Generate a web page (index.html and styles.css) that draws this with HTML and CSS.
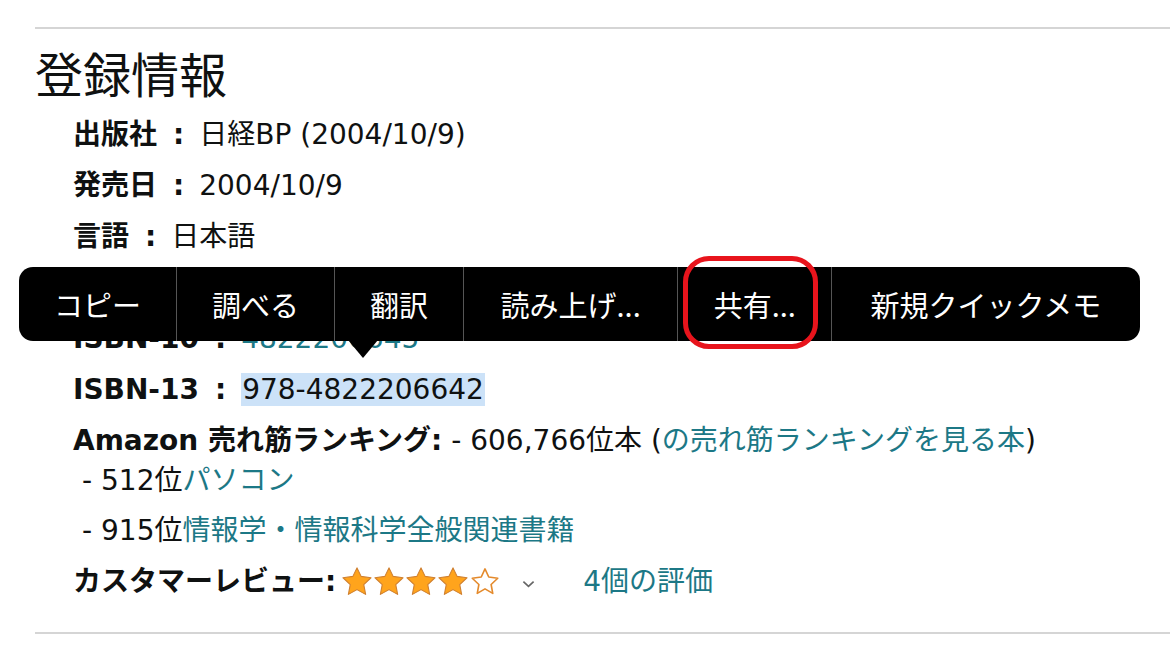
FILE: index.html
```html
<!DOCTYPE html>
<html lang="ja">
<head>
<meta charset="utf-8">
<title>登録情報</title>
<link rel="stylesheet" href="styles.css">
</head>
<body>
<div class="page">
  <hr class="rule">
  <h2 class="title">登録情報</h2>
  <ul class="details">
    <li><span class="k">出版社<span class="sep">:</span></span>日経BP (2004/10/9)</li>
    <li><span class="k">発売日<span class="sep">:</span></span>2004/10/9</li>
    <li><span class="k">言語<span class="sep">:</span></span>日本語</li>
    <li class="covered"><span class="k">単行本<span class="sep">:</span></span>296ページ</li>
    <li><span class="k">ISBN-10<span class="sep">:</span></span><a class="link">4822206645</a></li>
    <li><span class="k">ISBN-13<span class="sep">:</span></span><span class="sel">978-4822206642</span></li>
    <li class="rank"><span class="k">Amazon 売れ筋ランキング:</span> - 606,766位本 (<a class="link">の売れ筋ランキングを見る本</a>)
      <ul class="sub">
        <li>- 512位<a class="link">パソコン</a></li>
        <li>- 915位<a class="link">情報学・情報科学全般関連書籍</a></li>
      </ul>
    </li>
    <li class="review"><span class="k">カスタマーレビュー:</span><span class="stars"><svg class="star" viewBox="0 0 24 23"><polygon class="full" points="12,0.6 15.3,7.4 23.2,8.5 17.4,14 18.9,21.8 12,18 5.1,21.8 6.6,14 0.8,8.5 8.7,7.4"/></svg><svg class="star" viewBox="0 0 24 23"><polygon class="full" points="12,0.6 15.3,7.4 23.2,8.5 17.4,14 18.9,21.8 12,18 5.1,21.8 6.6,14 0.8,8.5 8.7,7.4"/></svg><svg class="star" viewBox="0 0 24 23"><polygon class="full" points="12,0.6 15.3,7.4 23.2,8.5 17.4,14 18.9,21.8 12,18 5.1,21.8 6.6,14 0.8,8.5 8.7,7.4"/></svg><svg class="star" viewBox="0 0 24 23"><polygon class="full" points="12,0.6 15.3,7.4 23.2,8.5 17.4,14 18.9,21.8 12,18 5.1,21.8 6.6,14 0.8,8.5 8.7,7.4"/></svg><svg class="star" viewBox="0 0 24 23"><polygon class="empty" points="12,1.4 15.0,7.9 22.2,8.9 16.9,13.9 18.2,21.0 12,17.4 5.8,21.0 7.1,13.9 1.8,8.9 9.0,7.9"/></svg></span><svg class="chev" viewBox="0 0 14 8"><polyline points="1.5,1.5 7,6.5 12.5,1.5"/></svg><a class="link count">4個の評価</a></li>
  </ul>
  <hr class="rule rule-bottom">

  <div class="menu">
    <div class="item">コピー</div>
    <div class="item">調べる</div>
    <div class="item">翻訳</div>
    <div class="item item-read">読み上げ...</div>
    <div class="item item-share">共有...</div>
    <div class="item item-memo">新規クイックメモ</div>
  </div>
  <div class="pointer"></div>
  <div class="annot"></div>
</div>
</body>
</html>
```
FILE: styles.css
```css
html, body {
  margin: 0;
  padding: 0;
  background: #fff;
}
.page {
  position: relative;
  width: 1170px;
  height: 657px;
  overflow: hidden;
  padding: 27px 0 0 35px;
  box-sizing: border-box;
  font-family: "DejaVu Sans", "Noto Sans CJK JP", sans-serif;
  color: #0f1111;
}
.rule {
  margin: 0;
  border: 0;
  height: 2px;
  background: #d5d5d5;
}
.rule-bottom {
  margin-top: 30px;
}
.title {
  margin: 13px 0 0 0;
  font-family: "Noto Sans CJK JP", sans-serif;
  font-weight: 400;
  font-size: 48px;
  line-height: 60px;
}
.details {
  list-style: none;
  margin: 13px 0 0 0;
  padding: 0 0 0 38px;
  font-size: 28px;
  line-height: 40px;
}
.details > li {
  margin-bottom: 11px;
  white-space: nowrap;
}
.details > li.covered {
  visibility: hidden;
}
.k {
  font-weight: 700;
}
.sep {
  margin: 0 15px 0 16px;
}
.link {
  color: #1c7886;
}
.sel {
  background: #cce2f8;
  padding: 0 1px;
}
.sub {
  list-style: none;
  margin: 0;
  padding: 0 0 0 9px;
}
.sub li + li {
  margin-top: 10px;
}
.details > li.rank {
  margin-bottom: 11px;
}
.stars {
  display: inline-flex;
  gap: 2px;
  margin-left: 6px;
  vertical-align: -5px;
}
.star {
  width: 30px;
  height: 29px;
}
.full {
  fill: #ffa41c;
  stroke: #d08030;
  stroke-width: 0.9;
  stroke-linejoin: round;
}
.empty {
  fill: #fff;
  stroke: #e48a2c;
  stroke-width: 1.3;
  stroke-linejoin: round;
}
.chev {
  width: 13px;
  height: 8px;
  margin-left: 22px;
  vertical-align: 3px;
  fill: none;
  stroke: #666;
  stroke-width: 1.8;
}
.count {
  margin-left: 48px;
}

.menu {
  position: absolute;
  left: 19px;
  top: 267px;
  height: 74px;
  display: flex;
  background: #000;
  border-radius: 14px;
  font-family: "Noto Sans CJK JP", sans-serif;
  font-size: 29px;
  color: #fff;
}
.item {
  padding: 0 35px;
  line-height: 74px;
  white-space: nowrap;
}
.item-read {
  padding: 0 36.5px;
}
.item-share {
  padding: 0 35.5px;
}
.item-memo {
  padding: 0 39px 0 38px;
}
.item + .item {
  border-left: 1px solid #555;
}
.pointer {
  position: absolute;
  left: 348px;
  top: 340px;
  width: 0;
  height: 0;
  border-left: 15px solid transparent;
  border-right: 15px solid transparent;
  border-top: 18px solid #000;
}
.annot {
  position: absolute;
  left: 683px;
  top: 256px;
  width: 135px;
  height: 93px;
  box-sizing: border-box;
  border: 5px solid #e8141c;
  border-radius: 26px;
}
```
